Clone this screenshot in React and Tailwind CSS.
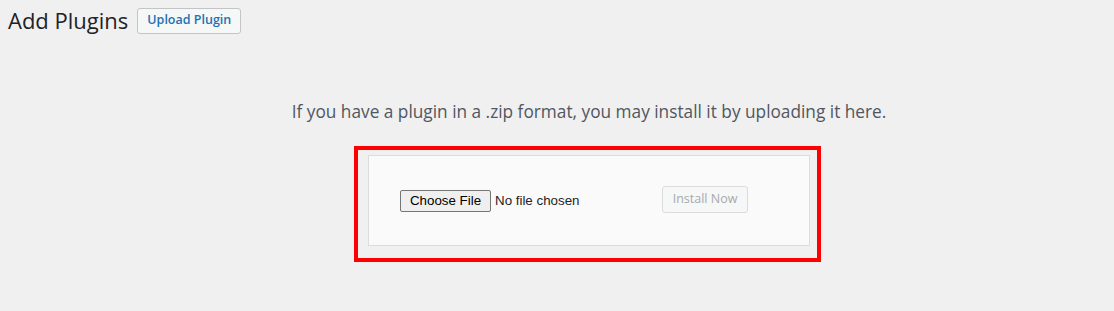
import React from "react";

const sans = "font-['Open_Sans','Noto_Sans',sans-serif]";

export default function App() {
  return (
    <div className={`min-h-[311px] w-full bg-[#f0f0f1] ${sans}`}>
      <div className="flex items-center pl-2 pt-[7px]">
        <h1 className="text-[22px] leading-[27px] text-[#1d2327]">Add Plugins</h1>
        <button
          type="button"
          className="ml-[9px] h-[26px] rounded-[3px] border border-[#c3c4c7] bg-[#f6f7f7] px-[9px] text-[12.5px] font-semibold text-[#2271b1]"
        >
          Upload Plugin
        </button>
      </div>

      <div className="pl-[64px]">
        <p className="pt-[66px] text-center text-[17.25px] leading-[24px] text-[#50575e]">
          If you have a plugin in a .zip format, you may install it by uploading it here.
        </p>

        <div className="ml-[290px] mt-[22px] w-[467px] border-4 border-[#ff0000] pb-[12px] pl-[10px] pr-[7px] pt-[5px]">
          <div className="flex h-[91px] items-center border border-[#dcdcde] bg-[#fafafa] pl-[31px]">
            <div className="flex w-[262px] items-center font-['Liberation_Sans',Arial,sans-serif] text-[13.33px]">
              <button
                type="button"
                className="h-[22px] w-[91px] rounded-[2px] border border-[#767676] bg-[#efefef] text-black"
              >
                Choose File
              </button>
              <span className="ml-[4px] text-[#1d2327]">No file chosen</span>
            </div>
            <button
              type="button"
              disabled
              className="-mt-[3px] h-[27px] w-[86px] rounded-[3px] border border-[#dcdcde] bg-[#f6f7f7] text-[12.5px] text-[#a7aaad]"
            >
              Install Now
            </button>
          </div>
        </div>
      </div>
    </div>
  );
}
